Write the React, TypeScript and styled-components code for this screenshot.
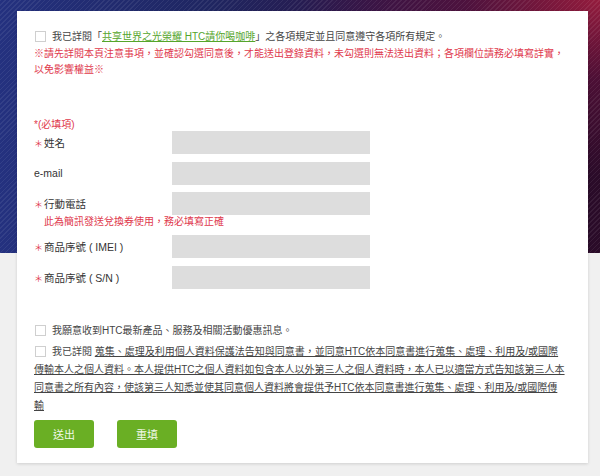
import React from "react";
import styled, { createGlobalStyle } from "styled-components";

const GlobalStyle = createGlobalStyle`
  html, body {
    margin: 0;
    padding: 0;
    background: #f0f0f0;
  }
  body {
    font-family: "Liberation Sans", "Noto Sans CJK TC", sans-serif;
    color: #444;
  }
  * { box-sizing: border-box; }
`;

const Page = styled.div`
  min-height: 476px;
  padding: 11px 12px 0 17px;
  background-color: #f0f0f0;
  background-image:
    repeating-linear-gradient(135deg, rgba(255, 255, 255, 0.07) 0 1px, transparent 1px 3.5px),
    radial-gradient(ellipse 50% 70% at 100% 0%, rgba(160, 30, 64, 0.9) 0%, rgba(110, 20, 66, 0.5) 45%, rgba(60, 10, 50, 0) 100%),
    linear-gradient(90deg, #24317f 0%, #1f2661 35%, #2d1444 65%, #2a0b28 100%);
  background-size: 100% 253px;
  background-repeat: no-repeat;
`;

const Card = styled.div`
  width: 571px;
  background: #fff;
  padding: 18px 22px 15px 17px;
  box-shadow: 0 1px 3px rgba(0, 0, 0, 0.14);
  font-size: 10px;
`;

const CheckRow = styled.div<{ $mt?: number }>`
  line-height: 16px;
  margin-top: ${(p) => p.$mt ?? 0}px;
  color: #444;
  white-space: nowrap;
`;

const Box = styled.span`
  display: inline-block;
  width: 11px;
  height: 11px;
  border: 1px solid #cfcfcf;
  background: #fff;
  vertical-align: -2px;
  margin: 0 6px 0 1px;
`;

const GreenLink = styled.a`
  color: #55a52b;
  text-decoration: underline;
`;

const Notice = styled.p`
  margin: 1px 0 0;
  color: #e0394d;
  line-height: 16px;
`;

const RequiredMark = styled.div`
  margin-top: 40px;
  line-height: 13px;
  color: #e0394d;
`;

const Fields = styled.div`
  display: flex;
  flex-direction: column;
`;

const FieldRow = styled.div<{ $mb?: number }>`
  display: grid;
  grid-template-columns: 138px 198px;
  align-items: center;
  height: 23px;
  margin-bottom: ${(p) => p.$mb ?? 7.5}px;
`;

const Label = styled.label`
  color: #333;
  font-size: 10.5px;
  white-space: nowrap;
`;

const Star = styled.span`
  color: #e0394d;
  font-family: "Noto Sans CJK TC", sans-serif;
  font-size: 9px;
  display: inline-block;
  width: 10px;
`;

const Input = styled.input`
  width: 198px;
  height: 23px;
  border: none;
  padding: 0;
  background: #dddddd;
`;

const Hint = styled.div`
  color: #e0394d;
  line-height: 14px;
  padding-left: 10px;
  margin-bottom: 6px;
`;

const Consent = styled.p`
  margin: 4px 0 0;
  line-height: 18px;
  color: #444;
`;

const UnderLink = styled.a`
  color: #444;
  text-decoration: underline;
`;

const ButtonBar = styled.div`
  display: flex;
  gap: 23px;
  margin-top: 5px;
`;

const Button = styled.button`
  width: 60px;
  height: 28px;
  border: none;
  border-radius: 3px;
  background: #6aaf24;
  color: #f2f9ea;
  font-family: "Noto Sans CJK TC", sans-serif;
  font-size: 11px;
  padding: 0;
  cursor: pointer;
`;

const fields = [
  { label: "姓名", req: true, mb: 7.5 },
  { label: "e-mail", req: false, mb: 7.5 },
  { label: "行動電話", req: true, mb: 0, hint: "此為簡訊發送兌換券使用，務必填寫正確" },
  { label: "商品序號 ( IMEI )", req: true, mb: 7.5 },
  { label: "商品序號 ( S/N )", req: true, mb: 0 },
];

export default function App() {
  return (
    <>
      <GlobalStyle />
      <Page>
        <Card>
          <CheckRow>
            <Box />
            我已詳閱「<GreenLink>共享世界之光榮耀 HTC請你喝咖啡</GreenLink>」之各項規定並且同意遵守各項所有規定。
          </CheckRow>
          <Notice>
            ※請先詳閱本頁注意事項，並確認勾選同意後，才能送出登錄資料，未勾選則無法送出資料；各項欄位請務必填寫詳實，以免影響權益※
          </Notice>
          <RequiredMark>*(必填項)</RequiredMark>
          <Fields>
            {fields.map((f) => (
              <React.Fragment key={f.label}>
                <FieldRow $mb={f.mb}>
                  <Label>
                    {f.req && <Star>＊</Star>}
                    {f.label}
                  </Label>
                  <Input type="text" />
                </FieldRow>
                {f.hint && <Hint>{f.hint}</Hint>}
              </React.Fragment>
            ))}
          </Fields>
          <CheckRow $mt={34.5}>
            <Box />
            我願意收到HTC最新產品、服務及相關活動優惠訊息。
          </CheckRow>
          <Consent>
            <Box />
            我已詳閱{" "}
            <UnderLink>
              蒐集、處理及利用個人資料保護法告知與同意書，並同意HTC依本同意書進行蒐集、處理、利用及/或國際傳輸本人之個人資料。本人提供HTC之個人資料如包含本人以外第三人之個人資料時，本人已以適當方式告知該第三人本同意書之所有內容，使該第三人知悉並使其同意個人資料將會提供予HTC依本同意書進行蒐集、處理、利用及/或國際傳輸
            </UnderLink>
          </Consent>
          <ButtonBar>
            <Button type="button">送出</Button>
            <Button type="button">重填</Button>
          </ButtonBar>
        </Card>
      </Page>
    </>
  );
}
